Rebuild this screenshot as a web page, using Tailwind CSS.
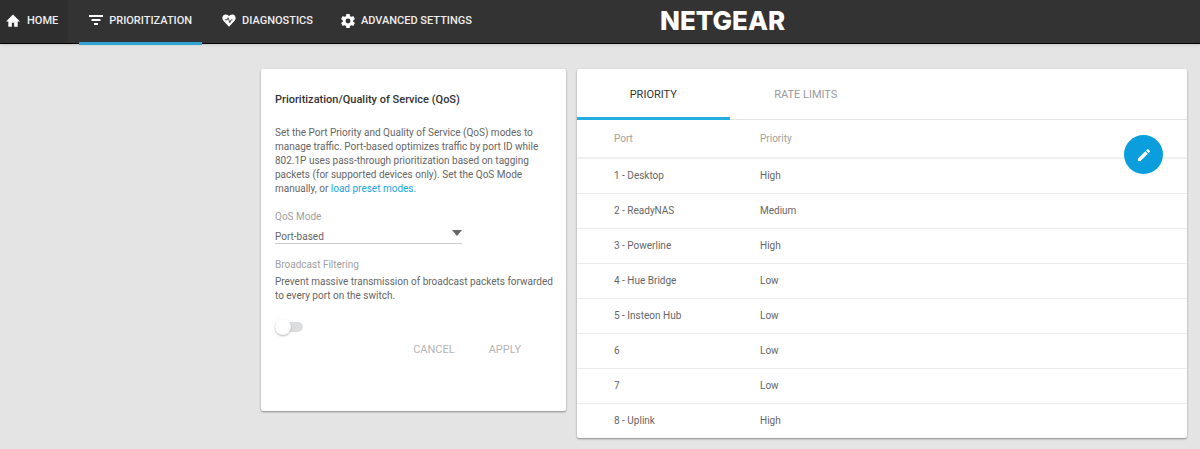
<!DOCTYPE html>
<html lang="en">
<head>
    <meta charset="UTF-8">
    <meta name="viewport" content="width=device-width, initial-scale=1.0">
    <title>NETGEAR - Prioritization</title>
    <script src="https://cdn.jsdelivr.net/npm/@tailwindcss/browser@4"></script>
</head>
<body class="min-h-screen bg-[#e4e4e4] font-[Roboto,sans-serif] text-[10px] leading-[14px] text-[#666]">
    <!-- Top bar -->
    <header class="relative h-11 bg-[#333] border-b border-black shadow-sm">
        <nav class="flex text-[11px] font-medium text-[#eee]">
            <a href="#" class="flex h-[43px] items-center gap-[7px] bg-[#2e2e2e] pb-0.5 pl-1.5 pr-2.5 mr-[11px]">
                <svg class="size-[14px] fill-white" viewBox="0 0 24 24"><path d="M10 22v-7h4v7h6v-9h4L12 1 0 13h4v9z"/></svg>
                HOME
            </a>
            <a href="#" aria-current="page" class="flex h-[45px] items-center gap-1.5 border-b-3 border-[#2fa4d4] pb-px px-2.5 mr-2.5">
                <svg class="size-[14px] fill-white" viewBox="0 0 14 14"><path d="M0 1h14v2H0zM2.500 5h9v2h-9zM5 9h4v2H5z"/></svg>
                PRIORITIZATION
            </a>
            <a href="#" class="flex h-[43px] items-center gap-1.5 pb-0.5 px-2.5 mr-2">
                <svg class="size-[14px]" viewBox="0 0 24 24"><path fill="#fff" d="M12 22 2 11C-1 7 1 1 6.500 1 9 1 11 2.500 12 4c1-1.500 3-3 5.500-3C23 1 25 7 22 11z"/><path fill="none" stroke="#333" stroke-width="1.500" d="M5 10h4l1.500-3.500 3 8.500 2-5H18"/></svg>
                DIAGNOSTICS
            </a>
            <a href="#" class="flex h-[43px] items-center gap-1.5 pb-0.5 px-2.5">
                <svg class="size-[14px] fill-white" viewBox="2 2 20 20"><path d="M19.430 12.980c.04-.32.07-.64.07-.98s-.03-.66-.07-.98l2.110-1.650c.19-.15.24-.42.12-.64l-2-3.460c-.12-.22-.39-.3-.61-.22l-2.490 1c-.52-.4-1.080-.73-1.690-.98l-.38-2.650A.488.488 0 0 0 14 2h-4c-.25 0-.46.18-.49.42l-.38 2.650c-.61.25-1.170.59-1.690.98l-2.490-1c-.23-.09-.49 0-.61.22l-2 3.460c-.13.22-.07.49.12.64l2.110 1.650c-.04.32-.07.65-.07.98s.03.66.07.98l-2.110 1.650c-.19.15-.24.42-.12.64l2 3.460c.12.22.39.3.61.22l2.490-1c.52.4 1.080.73 1.690.98l.38 2.650c.03.24.24.42.49.42h4c.25 0 .46-.18.49-.42l.38-2.650c.61-.25 1.170-.59 1.690-.98l2.490 1c.23.09.49 0 .61-.22l2-3.460c.12-.22.07-.49-.12-.64zM12 15.500a3.500 3.500 0 1 1 0-7 3.500 3.500 0 0 1 0 7z"/></svg>
                ADVANCED SETTINGS
            </a>
        </nav>
        <div class="absolute inset-y-0 left-[55%] flex items-center pb-0.5 font-[Inter,sans-serif] text-[26px] font-extrabold text-white">NETGEAR</div>
    </header>

    <main class="grid grid-cols-[1fr_2fr] items-start gap-[11px] pt-[25px] pr-[13px] pb-3 pl-[261px]">
        <!-- QoS settings -->
        <form class="rounded-xs bg-white pl-3.5 pr-2 pt-[23px] pb-[53px] shadow-[0_1px_2px_rgba(0,0,0,0.4)]">
            <h1 class="mb-[18px] text-[11px] leading-4 font-medium text-[#333]">Prioritization/Quality of Service (QoS)</h1>
            <p class="mb-3.5">Set the Port Priority and Quality of Service (QoS) modes to manage traffic. Port-based optimizes traffic by port ID while 802.1P uses pass-through prioritization based on tagging packets (for supported devices only). Set the QoS Mode manually, or <a href="#" class="text-[#22a5de]">load preset modes.</a></p>

            <label for="qosMode" class="block text-[#a0a0a0]">QoS Mode</label>
            <div class="relative mb-3.5 w-[187px]">
                <select id="qosMode" class="block h-5 w-full appearance-none border-b border-[#ccc] pt-1.5">
                    <option>Port-based</option>
                    <option>802.1P</option>
                </select>
                <svg class="pointer-events-none absolute top-1.5 right-0 h-[6px] w-[10px] fill-[#666]" viewBox="0 0 10 6"><path d="M0 0h10L5 6z"/></svg>
            </div>

            <label for="broadcast" class="mb-[3px] block text-[#a0a0a0]">Broadcast Filtering</label>
            <p class="mb-4">Prevent massive transmission of broadcast packets forwarded to every port on the switch.</p>
            <label class="relative flex h-4 w-7 items-center">
                <input id="broadcast" type="checkbox" class="peer h-2.5 w-7 appearance-none rounded-full bg-[#dcdddf] checked:bg-sky-200">
                <span class="absolute left-0 size-4 rounded-full bg-white shadow-[0_1px_2px_rgba(0,0,0,0.3)] peer-checked:left-3"></span>
            </label>
            <div class="mt-[7px] flex justify-end gap-[34px] pr-[37px] text-[11px] leading-4 text-[#b4b4b4]">
                <button type="reset">CANCEL</button>
                <button type="submit">APPLY</button>
            </div>
        </form>

        <!-- Port priorities -->
        <section class="relative rounded-xs bg-white shadow-[0_1px_2px_rgba(0,0,0,0.4)]">
            <div role="tablist" class="flex h-[51px] border-b border-[#e4e4e4] text-[11px]">
                <button role="tab" aria-selected="true" class="h-[51px] w-1/4 border-b-3 border-[#22aee0] pt-1 text-[#333]">PRIORITY</button>
                <button role="tab" aria-selected="false" class="h-[51px] w-1/4 border-b-3 border-transparent pt-1 text-[#999]">RATE LIMITS</button>
            </div>
            <table class="w-full table-fixed text-left">
                <thead>
                    <tr class="h-[38px] border-b-2 border-[#f0f0f0] text-[#a0a0a0]">
                        <th class="w-[30%] pl-[37px] font-normal">Port</th>
                        <th class="font-normal">Priority</th>
                    </tr>
                </thead>
                <tbody class="divide-y divide-[#ececec]">
                    <tr class="h-[35px]"><td class="pl-[37px]">1 - Desktop</td><td>High</td></tr>
                    <tr class="h-[35px]"><td class="pl-[37px]">2 - ReadyNAS</td><td>Medium</td></tr>
                    <tr class="h-[35px]"><td class="pl-[37px]">3 - Powerline</td><td>High</td></tr>
                    <tr class="h-[35px]"><td class="pl-[37px]">4 - Hue Bridge</td><td>Low</td></tr>
                    <tr class="h-[35px]"><td class="pl-[37px]">5 - Insteon Hub</td><td>Low</td></tr>
                    <tr class="h-[35px]"><td class="pl-[37px]">6</td><td>Low</td></tr>
                    <tr class="h-[35px]"><td class="pl-[37px]">7</td><td>Low</td></tr>
                    <tr class="h-[35px]"><td class="pl-[37px]">8 - Uplink</td><td>High</td></tr>
                </tbody>
            </table>
            <button aria-label="Edit" class="absolute top-[66px] right-6 flex size-[39px] items-center justify-center rounded-full bg-[#0a9fdc]">
                <svg class="size-[16px] fill-white" viewBox="0 0 24 24"><path d="M3 17.250V21h3.750L17.810 9.940l-3.750-3.750zM20.710 7.040a1 1 0 0 0 0-1.410l-2.340-2.340a1 1 0 0 0-1.410 0l-1.830 1.830 3.750 3.750z"/></svg>
            </button>
        </section>
    </main>
</body>
</html>
